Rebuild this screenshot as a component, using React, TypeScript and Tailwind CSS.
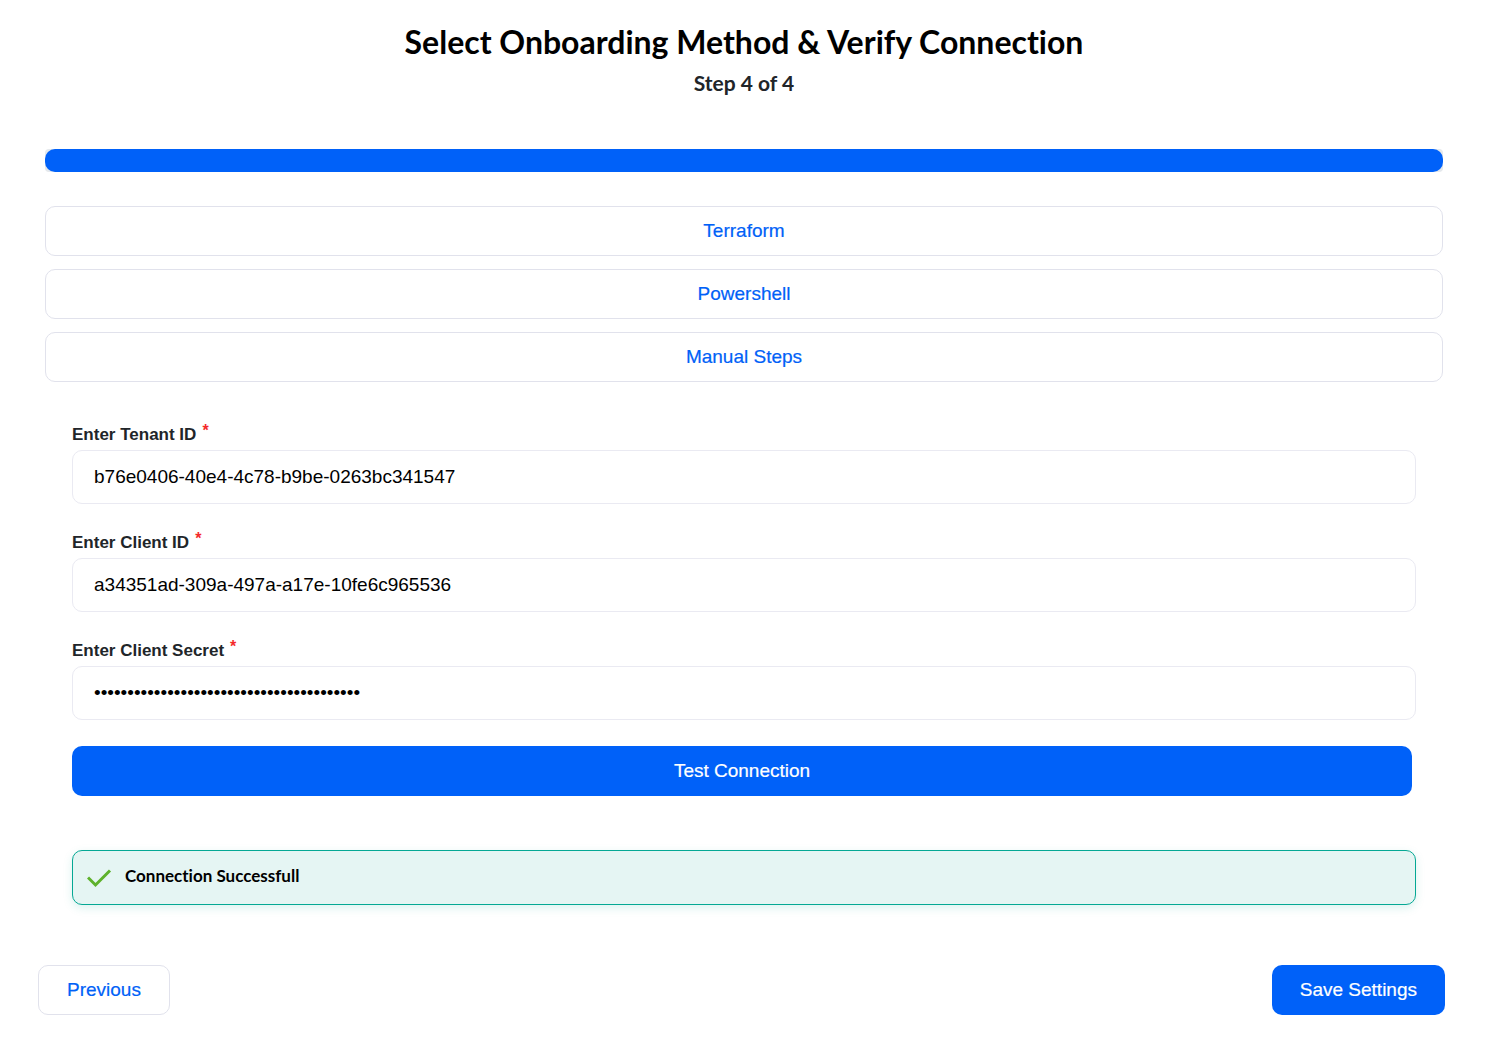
import type { ReactNode } from 'react';

const outline = 'h-[50px] rounded-[10px] border border-[#e1e2ec] bg-white text-[19px] text-[#0061f7] [-webkit-text-stroke:0.2px]';
const solid = 'h-[50px] rounded-[10px] bg-[#0061f9] text-[19px] text-white [-webkit-text-stroke:0.2px]';

function Field({ id, label, value, type = 'text' }: { id: string; label: ReactNode; value: string; type?: string }) {
  return (
    <div className="flex flex-col gap-[3px]">
      <label htmlFor={id} className="flex h-[25px] items-center gap-1.5 text-[17px] font-bold text-[#212529]">
        {label}
        <span className="h-6 text-base leading-4 text-[#f42a2a]">*</span>
      </label>
      <input
        id={id}
        type={type}
        defaultValue={value}
        className="h-[54px] w-full rounded-[10px] border border-[#eaeaf2] bg-white px-[21px] text-[19px] text-black outline-none"
      />
    </div>
  );
}

export default function App() {
  return (
    <main className="bg-white px-[45px] pt-[22px] pb-7 font-['Liberation_Sans',Arial,sans-serif]">
      <header className="text-center font-['Lato',sans-serif] font-bold [font-variant-ligatures:none]">
        <h1 className="text-[32px] leading-[39px] text-black">Select Onboarding Method &amp; Verify Connection</h1>
        <p className="mt-2 text-[21px] leading-7 text-[#212529]">Step 4 of 4</p>
      </header>
      <div role="progressbar" aria-valuenow={100} aria-label="Step 4 of 4" className="mt-[52px] h-[23px] rounded bg-[#e4e8ec]">
        <div className="h-full w-full rounded-[10px] bg-[#0061f9]" />
      </div>
      <div className="mt-[34px] flex flex-col gap-[13px]">
        <button className={outline}>Terraform</button>
        <button className={outline}>Powershell</button>
        <button className={outline}>Manual Steps</button>
      </div>
      <form className="mt-10 flex flex-col gap-[26px] px-[27px]" onSubmit={(e) => e.preventDefault()}>
        <Field id="tenant" label="Enter Tenant ID" value="b76e0406-40e4-4c78-b9be-0263bc341547" />
        <Field id="client" label="Enter Client ID" value="a34351ad-309a-497a-a17e-10fe6c965536" />
        <Field id="secret" label="Enter Client Secret" value="abcdefghijklmnopqrstuvwxyz01234567890123" type="password" />
        <button className={`${solid} mr-1`}>Test Connection</button>
      </form>
      <div
        role="status"
        className="mx-[27px] mt-[54px] flex h-[55px] items-center gap-3 rounded-[10px] border border-[#05a894] bg-[#e5f5f3] px-[14px] font-['Lato',sans-serif] text-[17px] font-bold text-black shadow-[0_3px_10px_#00a89426] [font-variant-ligatures:none]"
      >
        <svg width="26" height="20" viewBox="0 0 26 20" fill="none" stroke="#5eb22c" strokeWidth="3" aria-hidden="true">
          <path d="M1 9.5 8.5 17 23 2.5" />
        </svg>
        <span className="pb-1">Connection Successfull</span>
      </div>
      <nav className="-mr-0.5 -ml-[7px] mt-[60px] flex justify-between">
        <button className={`${outline} px-7`}>Previous</button>
        <button className={`${solid} px-7`}>Save Settings</button>
      </nav>
    </main>
  );
}
